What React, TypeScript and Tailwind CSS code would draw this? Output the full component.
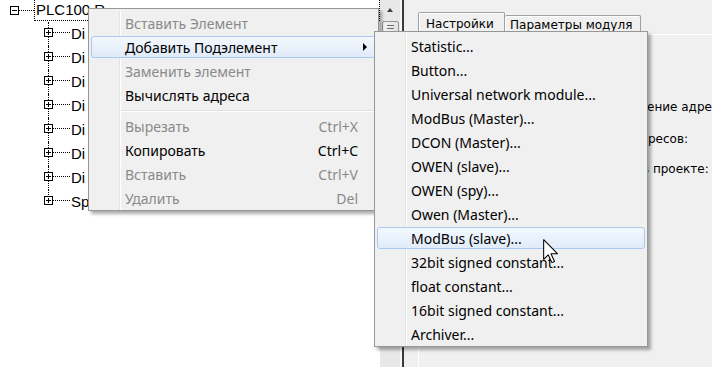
import React from 'react'

type Item = { label: string; shortcut?: string; disabled?: boolean; hot?: boolean; sub?: boolean } | 'sep'

const mainItems: Item[] = [
  { label: 'Вставить Элемент', disabled: true },
  { label: 'Добавить Подэлемент', hot: true, sub: true },
  { label: 'Заменить элемент', disabled: true },
  { label: 'Вычислять адреса' },
  'sep',
  { label: 'Вырезать', shortcut: 'Ctrl+X', disabled: true },
  { label: 'Копировать', shortcut: 'Ctrl+C' },
  { label: 'Вставить', shortcut: 'Ctrl+V', disabled: true },
  { label: 'Удалить', shortcut: 'Del', disabled: true },
]

const subItems: Item[] = [
  'Statistic...',
  'Button...',
  'Universal network module...',
  'ModBus (Master)...',
  'DCON (Master)...',
  'OWEN (slave)...',
  'OWEN (spy)...',
  'Owen (Master)...',
  'ModBus (slave)...',
  '32bit signed constant...',
  'float constant...',
  '16bit signed constant...',
  'Archiver...',
].map((label) => ({ label, hot: label === 'ModBus (slave)...' }))

// only the start of each node name shows from under the menu
const treeChildren = ['Di', 'Di', 'Di', 'Di', 'Di', 'Di', 'Di', 'Sp']

function PlusBox({ minus, className = '' }: { minus?: boolean; className?: string }) {
  return (
    <svg width="9" height="9" viewBox="0 0 9 9" className={className} shapeRendering="crispEdges">
      <rect x="0.5" y="0.5" width="8" height="8" fill="#fff" stroke="#000" />
      <line x1="2" y1="4.5" x2="7" y2="4.5" stroke="#000" />
      {!minus && <line x1="4.5" y1="2" x2="4.5" y2="7" stroke="#000" />}
    </svg>
  )
}

function Menu({ items, className }: { items: Item[]; className: string }) {
  return (
    <div
      className={`absolute z-10 border border-[#979797] bg-[#f0f0f0] px-[2px] pt-[2px] shadow-[3px_3px_3px_rgba(0,0,0,0.32)] font-['Noto_Sans',sans-serif] text-[14px] ${className}`}
    >
      <div className="bg-[linear-gradient(to_right,transparent_28px,#e2e3e3_28px,#e2e3e3_29px,#ffffff_29px,#ffffff_30px,transparent_30px)]">
        {items.map((it, i) =>
          it === 'sep' ? (
            <div key={i} className="flex h-[7px] flex-col justify-center ml-[30px] mr-[2px]">
              <div className="h-px bg-[#e0e0e0]" />
              <div className="h-px bg-white" />
            </div>
          ) : (
            <div key={i} className="h-6 py-px">
              <div
                className={`flex h-[22px] items-center rounded-[3px] border pl-[33px] pr-[17px] whitespace-nowrap ${
                  it.hot ? 'border-[#a8caf2] bg-[linear-gradient(#f3f8fe,#e0ebf9)]' : 'border-transparent'
                } ${it.disabled ? 'text-[#8a8a8a]' : 'text-black'}`}
              >
                <span>{it.label}</span>
                {it.shortcut && <span className="ml-auto">{it.shortcut}</span>}
                {it.sub && (
                  <span className="ml-auto mr-[-9px] h-0 w-0 border-y-[4px] border-l-[4px] border-y-transparent border-l-black" />
                )}
              </div>
            </div>
          ),
        )}
      </div>
    </div>
  )
}

export default function App() {
  return (
    <div className="relative flex h-[367px] w-[712px] overflow-hidden bg-[#f0f0f0]">
      {/* tree */}
      <div className="w-[380px] shrink-0 bg-white font-['Liberation_Sans',Arial,sans-serif] text-[15px] text-black">
        <div className="flex h-[21px] items-center pl-[10px]">
          <PlusBox minus />
          <div className="w-[15px] border-t border-dotted border-black" />
          <div className="flex h-full flex-1 items-center border-x border-b border-dotted border-black pl-px">PLC100 R</div>
        </div>
        <div className="mt-px">
          {treeChildren.map((name, i) => (
            <div key={i} className="flex h-6 items-center">
              <div className="w-[44px]" />
              <div className="relative w-[9px] self-stretch">
                <div
                  className={`absolute left-[4px] top-0 border-l border-dotted border-black ${
                    i === treeChildren.length - 1 ? 'h-[11px]' : 'h-full'
                  }`}
                />
                <PlusBox className="absolute left-0 top-[6px]" />
              </div>
              <div className="mt-[-3px] w-[17px] border-t border-dotted border-black" />
              <span className="pl-px whitespace-nowrap">{name}</span>
            </div>
          ))}
        </div>
      </div>

      {/* scrollbar */}
      <div className="flex w-[20px] shrink-0 flex-col items-center bg-[#e8e8e8]">
        <div className="mt-[8px] h-0 w-0 border-x-[3px] border-b-[4px] border-x-transparent border-b-[#404040]" />
        <div className="mt-[9px] flex h-[40px] w-[17px] flex-col items-center gap-[2px] rounded-[2px] border border-[#959595] bg-[linear-gradient(to_right,#f3f3f3,#e2e2e2)] pt-[3px]">
          <div className="h-px w-[7px] bg-[#6f6f6f]" />
          <div className="h-px w-[7px] bg-[#6f6f6f]" />
          <div className="h-px w-[7px] bg-[#6f6f6f]" />
        </div>
      </div>
      <div className="w-[2px] shrink-0 bg-[#f7f7f7]" />
      <div className="w-[2px] shrink-0 bg-[#3a3a3a]" />

      {/* right panel */}
      <div className="flex flex-1 flex-col bg-[#f0f0f0] pl-[14px] font-['DejaVu_Sans',sans-serif] text-[12px] text-black">
        <div className="flex h-[34px] items-end">
          <div className="relative z-[1] mb-[-1px] flex h-[23px] w-[87px] items-center rounded-t-[2px] border-x border-t border-[#a0a0a0] bg-[#f0f0f0] pl-[7px] shadow-[inset_1px_1px_0_#fff]">
            Настройки
          </div>
          <div className="flex h-[19px] w-[136px] items-center rounded-t-[2px] border-r border-t border-[#a0a0a0] pl-[5px] shadow-[inset_1px_1px_0_#fff]">
            Параметры модуля
          </div>
        </div>
        <div className="flex-1 border-l border-t border-white">
          <div className="ml-[228px] mt-[64px] h-4 whitespace-nowrap leading-4">ение адресов</div>
          <div className="ml-[229px] mt-[16px] h-4 whitespace-nowrap leading-4">ресов:</div>
          <div className="ml-[223px] mt-[14px] h-4 whitespace-nowrap leading-4">в проекте:</div>
        </div>
      </div>

      <Menu items={mainItems} className="left-[88px] top-[8px] w-[291px]" />
      <Menu items={subItems} className="left-[374px] top-[31px] w-[274px]" />

      {/* mouse cursor */}
      <svg className="absolute left-[543px] top-[239px] z-20" width="17" height="25" viewBox="0 0 13 19">
        <path
          d="M0.5 0.5 L0.5 15.5 L4 12 L6.8 18 L8.8 17.1 L6.1 11.2 L11 11.2 Z"
          fill="#fff"
          stroke="#000"
          strokeWidth="0.8"
          strokeLinejoin="round"
        />
      </svg>
    </div>
  )
}
